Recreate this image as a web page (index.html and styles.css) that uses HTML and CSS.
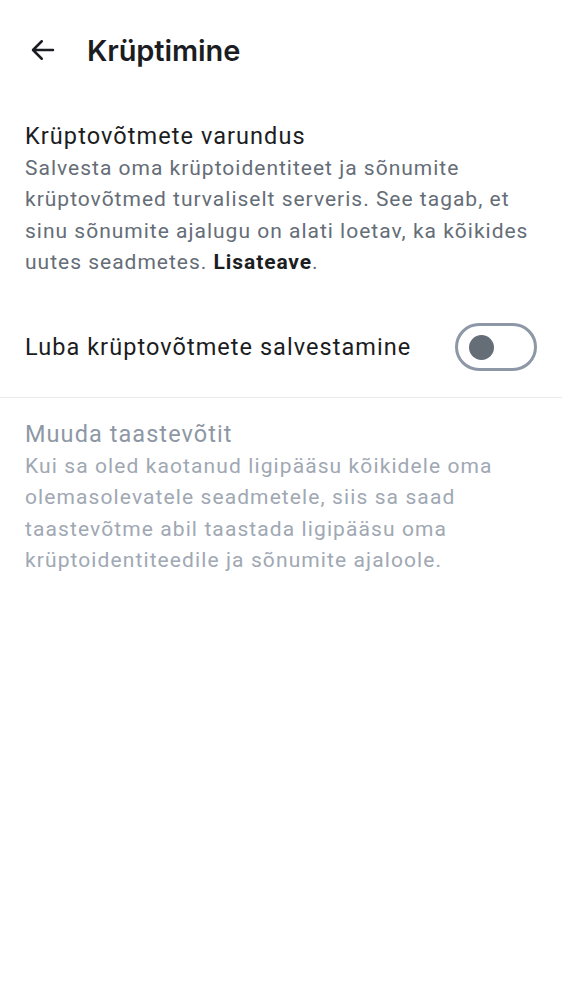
FILE: index.html
```html
<!DOCTYPE html>
<html lang="et">
<head>
<meta charset="utf-8">
<link rel="stylesheet" href="styles.css">
</head>
<body>
<div class="screen">
  <header class="topbar">
    <button class="back" aria-label="Tagasi">
      <svg width="30" height="30" viewBox="0 0 24 24" fill="none" stroke="#1b1d22" stroke-width="2" stroke-linecap="round" stroke-linejoin="round">
        <path d="M20 12H4.5M11 5l-7 7 7 7"/>
      </svg>
    </button>
    <h1 class="title">Krüptimine</h1>
  </header>

  <section class="block">
    <h2 class="block-title">Krüptovõtmete varundus</h2>
    <p class="block-text">Salvesta oma krüptoidentiteet ja sõnumite krüptovõtmed turvaliselt serveris. See tagab, et sinu sõnumite ajalugu on alati loetav, ka kõikides uutes seadmetes. <b>Lisateave</b>.</p>
  </section>

  <div class="row">
    <span class="row-label">Luba krüptovõtmete salvestamine</span>
    <span class="switch"><span class="knob"></span></span>
  </div>

  <div class="divider"></div>

  <section class="block disabled">
    <h2 class="block-title">Muuda taastevõtit</h2>
    <p class="block-text">Kui sa oled kaotanud ligipääsu kõikidele oma olemasolevatele seadmetele, siis sa saad taastevõtme abil taastada ligipääsu oma krüptoidentiteedile ja sõnumite ajaloole.</p>
  </section>
</div>
</body>
</html>
```

FILE: styles.css
```css
* { box-sizing: border-box; }
html, body { margin: 0; padding: 0; background: #fff; }
body { font-family: Roboto, "Noto Sans", sans-serif; color: #1b1d22; }
.screen { width: 562px; }

.topbar {
  display: flex;
  align-items: center;
  height: 100px;
  padding-left: 28px;
  gap: 29px;
}
.back {
  border: 0; background: none; padding: 0; margin: 0;
  width: 30px; height: 30px; display: flex;
}
.title {
  margin: 0;
  font-family: Inter, sans-serif;
  font-weight: 600;
  font-size: 29px;
  letter-spacing: -0.1px;
  color: #1b1d22;
}

.block { padding: 21px 25px 0 25px; }
.block-title {
  margin: 0;
  font-weight: 400;
  font-size: 23.5px;
  line-height: 30px;
  letter-spacing: 1.07px;
  color: #1b1d22;
}
.block-text {
  margin: 2px 0 0 0;
  font-size: 21px;
  line-height: 31.3px;
  letter-spacing: 1.0px;
  color: #656d77;
}
.block-text b { font-weight: 700; color: #1b1d22; letter-spacing: 0.9px; }

.row {
  display: flex;
  align-items: center;
  justify-content: space-between;
  padding: 0 25px;
  height: 94px;
  margin-top: 22px;
}
.row-label { font-size: 23.5px; letter-spacing: 1.05px; color: #1b1d22; }
.switch {
  width: 82px; height: 48px;
  border: 3px solid #8d97a5;
  border-radius: 24px;
  display: flex; align-items: center;
  padding-left: 11px;
}
.knob { width: 25px; height: 25px; border-radius: 50%; background: #656d77; }

.divider { height: 1px; background: #e9ebee; margin-top: 3px; }

.disabled { padding-top: 21px; }
.disabled .block-title { color: #8d97a5; }
.disabled .block-text { color: #a0a8b3; letter-spacing: 1.1px; }
```
